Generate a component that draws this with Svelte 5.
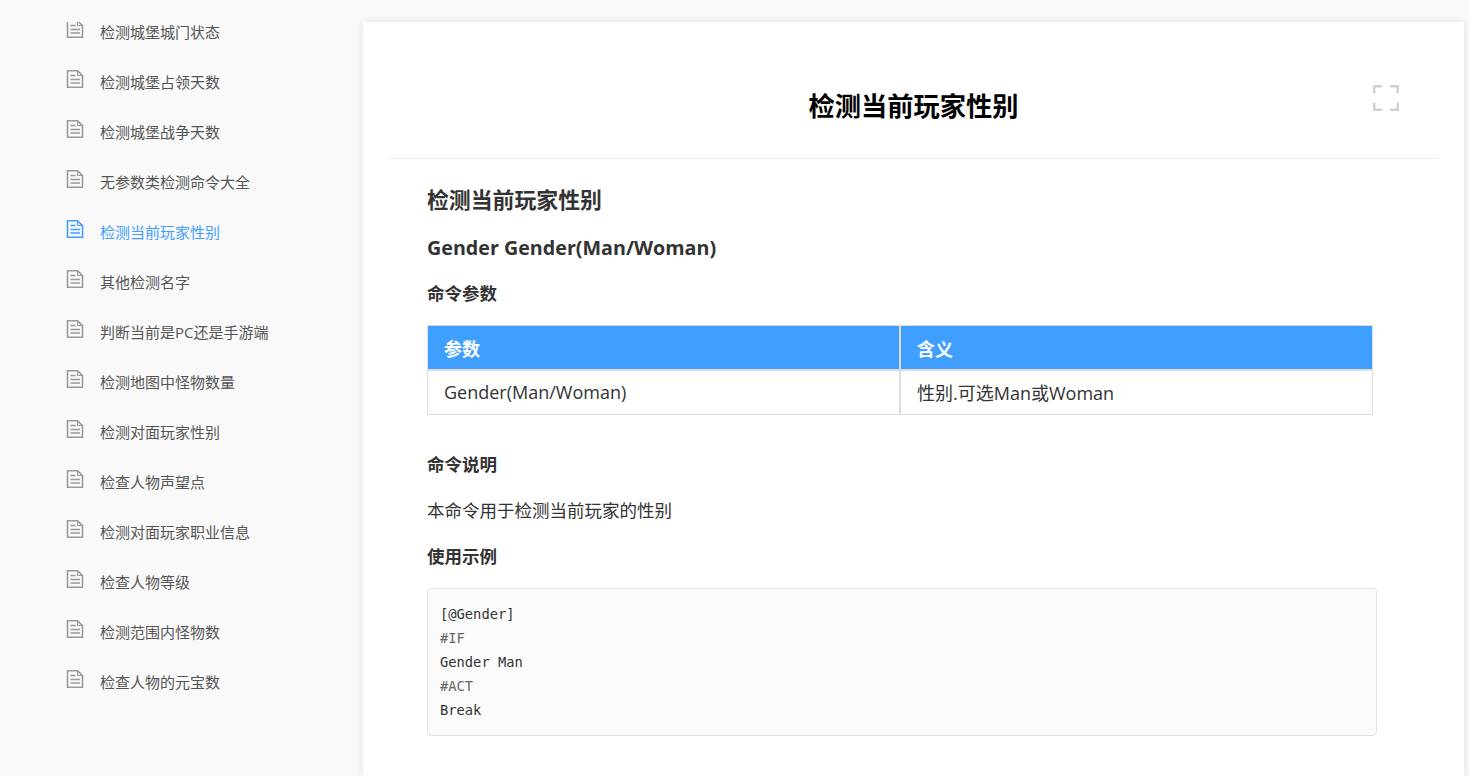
<script>
  const items = [
    '检测城堡城门状态',
    '检测城堡占领天数',
    '检测城堡战争天数',
    '无参数类检测命令大全',
    '检测当前玩家性别',
    '其他检测名字',
    '判断当前是PC还是手游端',
    '检测地图中怪物数量',
    '检测对面玩家性别',
    '检查人物声望点',
    '检测对面玩家职业信息',
    '检查人物等级',
    '检测范围内怪物数',
    '检查人物的元宝数'
  ];
  const active = '检测当前玩家性别';
  const code = ['[@Gender]', '#IF', 'Gender Man', '#ACT', 'Break'];
</script>

<div class="page">
  <aside class="sidebar">
    <ul class="menu">
      {#each items as item}
        <li class="menu-item" class:active={item === active}>
          <svg class="doc-icon" width="18" height="20" viewBox="0 0 18 20" fill="none" stroke="currentColor">
            <path d="M1.5 1.8H11.5L16.5 6.5V18.2H1.5Z" stroke-width="1.6" />
            <path d="M11.5 2V6.5H16" stroke-width="1" />
            <path d="M4.5 6.5H9.5M4.5 10.5H14M4.5 14H14" stroke-width="1.3" />
          </svg>
          <span>{item}</span>
        </li>
      {/each}
    </ul>
  </aside>

  <main class="card">
    <header class="card-head">
      <h1>检测当前玩家性别</h1>
      <svg class="expand" width="26" height="26" viewBox="0 0 26 26" fill="none" stroke="#ced1d6" stroke-width="2.5">
        <path d="M1.2 8.5V1.2H9M17 1.2H24.8V8.5M24.8 17.5V24.8H17M9 24.8H1.2V17.5" />
      </svg>
    </header>

    <article class="doc">
      <h2>检测当前玩家性别</h2>
      <h3>Gender Gender(Man/Woman)</h3>
      <h4>命令参数</h4>
      <table>
        <thead>
          <tr><th>参数</th><th>含义</th></tr>
        </thead>
        <tbody>
          <tr><td>Gender(Man/Woman)</td><td>性别.可选Man或Woman</td></tr>
        </tbody>
      </table>
      <h4 class="after-table">命令说明</h4>
      <p>本命令用于检测当前玩家的性别</p>
      <h4 class="after-p">使用示例</h4>
      <pre>{#each code as line}<code class:dim={line.startsWith('#')}>{line}</code>{/each}</pre>
    </article>
  </main>
</div>

<style>
:global(body) {
  margin: 0;
  background: #f9f9f9;
  overflow: hidden;
}

.page {
  display: flex;
  height: 776px;
  overflow: hidden;
  font-family: "Open Sans", "Noto Sans CJK SC", sans-serif;
  color: #333;
}

.sidebar {
  width: 363px;
  flex: none;
  margin-top: 22px;
  overflow: hidden;
}

.menu {
  list-style: none;
  margin: -15px 0 0;
  padding: 0 0 0 66px;
}

.menu-item {
  display: flex;
  align-items: center;
  height: 50px;
  font-size: 15px;
  color: #555;
}

.menu-item span {
  margin-top: -2px;
}

.menu-item .doc-icon {
  color: #999;
  margin: -6px 16px 0 0;
}

.menu-item.active,
.menu-item.active .doc-icon {
  color: #409eff;
}

.card {
  width: 1101px;
  flex: none;
  margin-top: 22px;
  padding: 0 25px;
  box-sizing: border-box;
  background: #fff;
  box-shadow: 0 0 8px rgba(0, 0, 0, 0.1);
}

.card-head {
  position: relative;
  height: 136px;
  display: flex;
  align-items: center;
  justify-content: center;
  border-bottom: 1px solid #eee;
}

h1 {
  margin: 30px 0 0;
  font-size: 26.25px;
  font-weight: 700;
  color: #000;
}

.expand {
  position: absolute;
  right: 40px;
  top: 63px;
}

.doc {
  padding: 27px 62px 0 39px;
}

h2 {
  margin: 0;
  font-size: 21.875px;
  line-height: 28px;
  font-weight: 700;
}

h3 {
  margin: 21px 0 0;
  font-size: 19.69px;
  line-height: 26px;
  font-weight: 700;
}

h4 {
  margin: 20px 0 0;
  font-size: 17.5px;
  line-height: 24px;
  font-weight: 700;
}

table {
  width: 946px;
  margin-top: 20px;
  border-collapse: separate;
  border-spacing: 0;
  table-layout: fixed;
  font-size: 18px;
}

th, td {
  box-sizing: border-box;
  height: 45px;
  border: 1px solid #ddd;
  padding: 0 16px;
  text-align: left;
}

td {
  padding-bottom: 2px;
}

th {
  background: #409eff;
  color: #fff;
  font-weight: 700;
  font-size: 18px;
}

h4.after-table {
  margin-top: 37px;
}

h4.after-p {
  margin-top: 22px;
}

p {
  margin: 22px 0 0;
  font-size: 17.5px;
  line-height: 24px;
}

pre {
  width: 950px;
  box-sizing: border-box;
  margin: 20px 0 0;
  padding: 13px 12px;
  background: #fbfbfb;
  border: 1px solid #e4e4e4;
  border-radius: 4px;
  font-family: "DejaVu Sans Mono", monospace;
  font-size: 13.75px;
  line-height: 24px;
}

code {
  display: block;
  font-family: inherit;
}

code.dim {
  color: #666;
}
</style>
